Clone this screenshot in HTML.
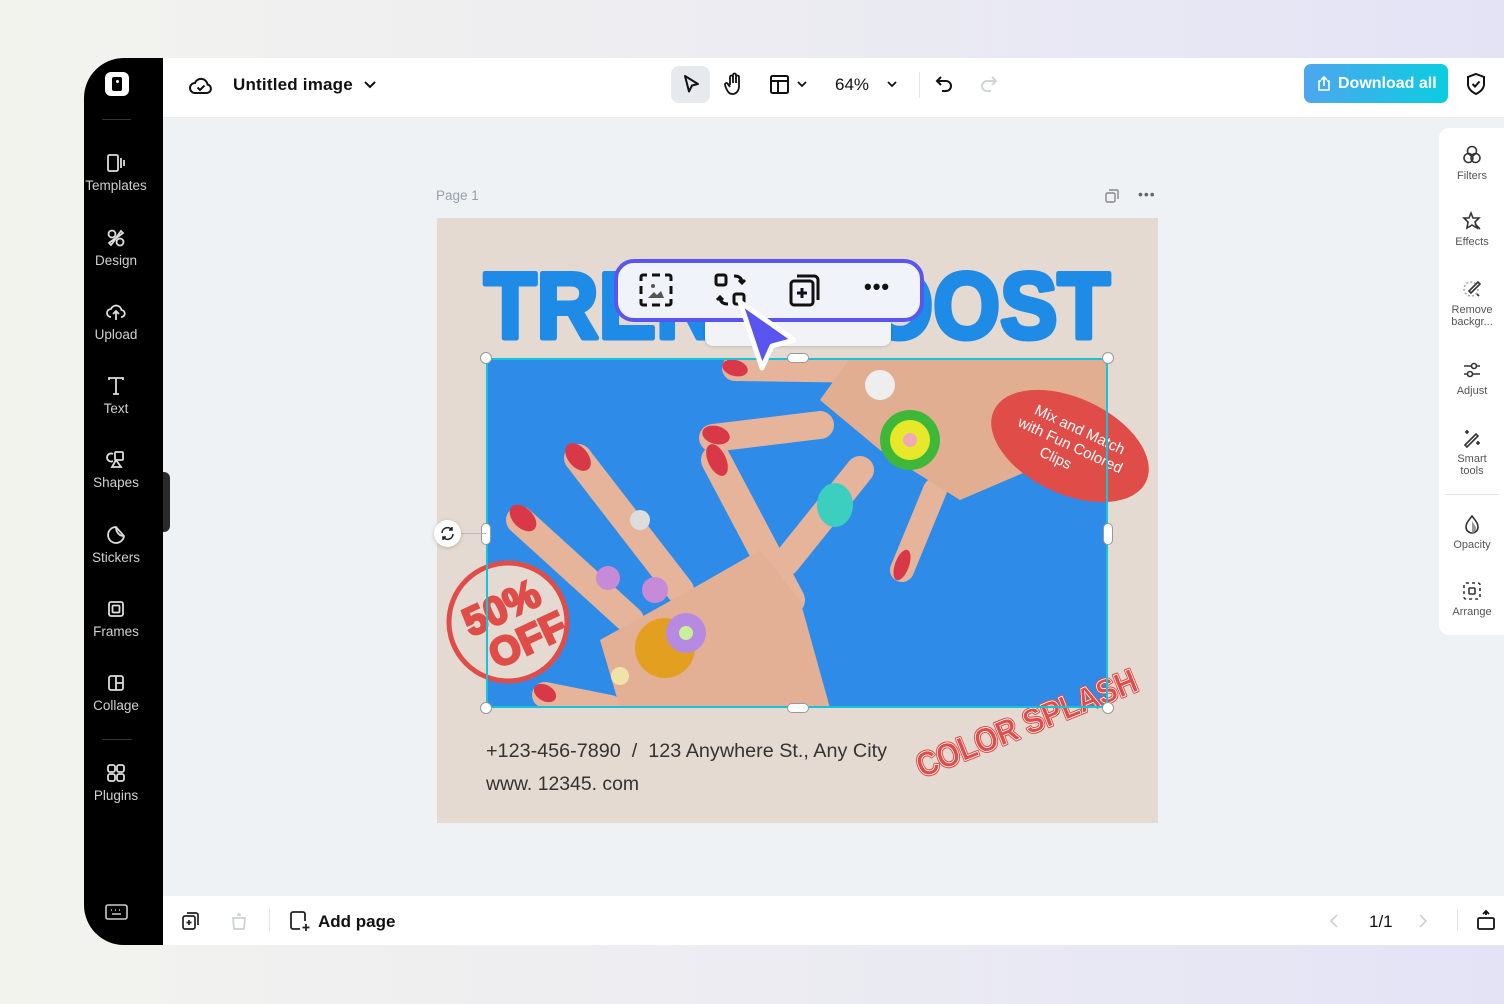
<!DOCTYPE html>
<html><head><meta charset="utf-8"><style>
*{margin:0;padding:0;box-sizing:border-box}
body{width:1504px;height:1004px;overflow:hidden;font-family:"Liberation Sans",sans-serif;background:linear-gradient(90deg,#f3f3ee 0%,#ececf2 50%,#e4e3f6 100%);position:relative}
.app{position:absolute;left:84px;top:58px;width:1420px;height:887px;border-radius:40px 0 0 40px;overflow:hidden;background:#eff2f5}
.side{position:absolute;left:0;top:0;width:79px;height:887px;background:#000}
.top{position:absolute;left:79px;top:0;right:0;height:60px;background:#fff;border-bottom:1px solid #e8eaee}
.bot{position:absolute;left:79px;bottom:0;right:0;height:49px;background:#fff}
.si{position:absolute;left:0;width:64px;text-align:center;color:#d0d0d0;font-size:13.5px;white-space:nowrap}
.si svg{display:block;margin:0 auto 4px}
.ri{position:absolute;left:0;width:66px;text-align:center;color:#555;font-size:11px;line-height:12px}
.ri svg{display:block;margin:0 auto 4px}
.abs{position:absolute}
.h{position:absolute;width:12px;height:12px;border-radius:50%;background:#fff;border:1px solid #999}
</style></head><body>
<div class="app">
 <div class="side">
  <div class="abs" style="left:21px;top:14px;width:24px;height:24px;background:#fff;border-radius:6px"><div class="abs" style="left:7px;top:5px;width:10px;height:14px;background:#000;border-radius:2px"></div><div class="abs" style="left:11px;top:8px;width:3px;height:3px;border-radius:50%;background:#fff"></div></div>
  <div class="abs" style="left:18px;top:61px;width:29px;height:1px;background:#333"></div>
  <div class="si" style="top:94px"><svg width="22" height="22" viewBox="0 0 22 22" fill="none" stroke="#ddd" stroke-width="1.8"><rect x="3" y="3" width="10" height="16" rx="1.5"/><path d="M16 6v10M19 8v6"/></svg>Templates</div>
  <div class="si" style="top:169px"><svg width="22" height="22" viewBox="0 0 22 22" fill="none" stroke="#ddd" stroke-width="1.8"><circle cx="7" cy="7" r="3.5"/><circle cx="15" cy="15" r="3.5"/><path d="M10 12l6-8 2 2-8 6zM12 10l-6 8-2-2 8-6z"/></svg>Design</div>
  <div class="si" style="top:243px"><svg width="22" height="22" viewBox="0 0 22 22" fill="none" stroke="#ddd" stroke-width="1.8"><path d="M6 16a4 4 0 0 1 0-8 5.5 5.5 0 0 1 10.5 1A3.5 3.5 0 0 1 16 16M11 19v-8M8 13l3-3 3 3"/></svg>Upload</div>
  <div class="si" style="top:317px"><svg width="22" height="22" viewBox="0 0 22 22" fill="none" stroke="#ddd" stroke-width="1.8"><path d="M4 5V3h14v2M11 3v16M8 19h6"/></svg>Text</div>
  <div class="si" style="top:391px"><svg width="22" height="22" viewBox="0 0 22 22" fill="none" stroke="#ddd" stroke-width="1.8"><path d="M8 5a4 4 0 1 0 0 7"/><rect x="10" y="3" width="8" height="8" rx="1"/><path d="M11 11l-4 7h9z"/></svg>Shapes</div>
  <div class="si" style="top:466px"><svg width="22" height="22" viewBox="0 0 22 22" fill="none" stroke="#ddd" stroke-width="1.8"><path d="M19 12A8 8 0 1 1 11 3l8 9z"/><path d="M11 3c0 5 3 9 8 9"/></svg>Stickers</div>
  <div class="si" style="top:540px"><svg width="22" height="22" viewBox="0 0 22 22" fill="none" stroke="#ddd" stroke-width="1.8"><rect x="4" y="4" width="14" height="14" rx="2"/><rect x="7.5" y="7.5" width="7" height="7" rx="1"/></svg>Frames</div>
  <div class="si" style="top:614px"><svg width="22" height="22" viewBox="0 0 22 22" fill="none" stroke="#ddd" stroke-width="1.8"><rect x="4" y="4" width="14" height="14" rx="2"/><path d="M11 4v14M11 11h7"/></svg>Collage</div>
  <div class="abs" style="left:18px;top:681px;width:30px;height:1px;background:#333"></div>
  <div class="si" style="top:704px"><svg width="22" height="22" viewBox="0 0 22 22" fill="none" stroke="#ddd" stroke-width="1.8"><rect x="3" y="3" width="7" height="7" rx="2"/><rect x="12" y="3" width="7" height="7" rx="2"/><rect x="3" y="12" width="7" height="7" rx="2"/><rect x="12" y="12" width="7" height="7" rx="2"/></svg>Plugins</div>
  <svg class="abs" style="left:21px;top:845px" width="23" height="18" viewBox="0 0 23 18" fill="none" stroke="#ccc" stroke-width="1.6"><rect x="1" y="2" width="21" height="14" rx="2"/><path d="M6 7h1M10 7h1M14 7h1M7 11h9"/></svg>
 </div>
 <div class="abs" style="left:79px;top:414px;width:7px;height:60px;background:#2a2a2a;border-radius:0 6px 6px 0"></div>
 <div class="top">
  <svg class="abs" style="left:26px;top:16px" width="24" height="22" viewBox="0 0 24 22" fill="none" stroke="#111" stroke-width="2"><path d="M6 19a5 5 0 0 1 0-10 6.5 6.5 0 0 1 12.5 1.5A4.3 4.3 0 0 1 18 19z"/><path d="M8.5 13.5l2.5 2.5 4.5-4.5"/></svg>
  <div class="abs" style="left:70px;top:17px;font-size:17px;color:#111;font-weight:bold;letter-spacing:.2px">Untitled image</div>
  <svg class="abs" style="left:200px;top:21px" width="14" height="12" viewBox="0 0 14 12" fill="none" stroke="#111" stroke-width="2"><path d="M2 3l5 5 5-5"/></svg>
  <div class="abs" style="left:508px;top:8px;width:39px;height:37px;background:#e6eaee;border-radius:8px"></div>
  <svg class="abs" style="left:517px;top:15px" width="22" height="22" viewBox="0 0 22 22" fill="none" stroke="#111" stroke-width="2"><path d="M5 3l13 8-6 1.5-3 6z" stroke-linejoin="round"/></svg>
  <svg class="abs" style="left:560px;top:14px" width="22" height="24" viewBox="0 0 22 24" fill="none" stroke="#111" stroke-width="1.8"><path d="M7 13V5a1.5 1.5 0 0 1 3 0v6V3a1.5 1.5 0 0 1 3 0v8V5a1.5 1.5 0 0 1 3 0v9c0 5-3 8-6.5 8S5 20 3 16l-1-3a1.5 1.5 0 0 1 3-.8L7 15"/></svg>
  <svg class="abs" style="left:606px;top:16px" width="22" height="22" viewBox="0 0 22 22" fill="none" stroke="#111" stroke-width="2"><rect x="2" y="2" width="17" height="17" rx="1.5"/><path d="M2 7h17M9 7v12"/></svg>
  <svg class="abs" style="left:633px;top:22px" width="12" height="10" viewBox="0 0 12 10" fill="none" stroke="#111" stroke-width="1.8"><path d="M2 2l4 4 4-4"/></svg>
  <div class="abs" style="left:672px;top:17px;font-size:17px;color:#111">64%</div>
  <svg class="abs" style="left:723px;top:22px" width="12" height="10" viewBox="0 0 12 10" fill="none" stroke="#111" stroke-width="1.8"><path d="M2 2l4 4 4-4"/></svg>
  <div class="abs" style="left:756px;top:14px;width:1px;height:26px;background:#e2e4e8"></div>
  <svg class="abs" style="left:771px;top:16px" width="22" height="22" viewBox="0 0 22 22" fill="none" stroke="#111" stroke-width="2"><path d="M7 3L3 7l4 4M3 7h9a5 5 0 0 1 0 10H8"/></svg>
  <svg class="abs" style="left:814px;top:16px" width="22" height="22" viewBox="0 0 22 22" fill="none" stroke="#cfd4da" stroke-width="2"><path d="M15 3l4 4-4 4M19 7h-9a5 5 0 0 0 0 10h4"/></svg>
  <div class="abs" style="left:1141px;top:6px;width:144px;height:39px;border-radius:7px;background:linear-gradient(90deg,#4ea6ee,#0bcde0);color:#fff;font-size:16px;font-weight:bold;line-height:39px;padding-left:34px">Download all</div>
  <svg class="abs" style="left:1153px;top:17px" width="16" height="17" viewBox="0 0 16 17" fill="none" stroke="#fff" stroke-width="1.6"><path d="M5 6H3v9h10V6h-2M8 11V2M5 5l3-3 3 3"/></svg>
  <svg class="abs" style="left:1302px;top:14px" width="22" height="24" viewBox="0 0 22 24" fill="none" stroke="#111" stroke-width="2"><path d="M11 2l8 3v7c0 5-4 8-8 10-4-2-8-5-8-10V5z"/><path d="M7.5 12l2.5 2.5 4.5-5"/></svg>
 </div>
 <div class="abs" style="left:352px;top:130px;font-size:13.5px;color:#98a0aa">Page 1</div>
 <svg class="abs" style="left:1020px;top:130px" width="16" height="16" viewBox="0 0 16 16" fill="none" stroke="#888" stroke-width="1.4"><rect x="2" y="5" width="9" height="9" rx="1.5"/><path d="M5 2h8a1 1 0 0 1 1 1v8"/></svg>
 <div class="abs" style="left:1054px;top:128px;font-size:14px;color:#666;letter-spacing:1px">•••</div>
 <div class="abs" style="left:353px;top:160px;width:721px;height:605px;background:#e4dad1;overflow:hidden">
  <svg width="721" height="605" viewBox="437 218 721 605" style="position:absolute;left:0;top:0">
   <text x="484" y="338" font-family="Liberation Sans" font-weight="bold" font-size="94" fill="#1e8be6" stroke="#1e8be6" stroke-width="5" stroke-linejoin="round" textLength="626" lengthAdjust="spacingAndGlyphs">TREND BOOST</text>
   <defs><clipPath id="ph"><rect x="486" y="358" width="622" height="350"/></clipPath></defs>
   <g clip-path="url(#ph)">
    <rect x="486" y="358" width="622" height="350" fill="#2e8ce8"/>
    <g stroke="#e6b49a" stroke-linecap="round" fill="none">
     <path d="M735 368L880 370" stroke-width="26"/>
     <path d="M713 438L820 425" stroke-width="28"/>
     <path d="M786 562L860 470" stroke-width="28"/>
     <path d="M902 570L935 490" stroke-width="24"/>
     <path d="M520 520L630 620" stroke-width="28"/>
     <path d="M578 458L680 590" stroke-width="28"/>
     <path d="M716 460L790 600" stroke-width="30"/>
     <path d="M545 695L610 708" stroke-width="26"/>
    </g>
    <path d="M850 358H1108V420L1030 470L960 500L880 450L820 400z" fill="#e2ae92"/>
    <path d="M600 640L690 590L760 550L800 600L830 708H620z" fill="#e3b095"/>
    <g fill="#d93848"><ellipse cx="523" cy="518" rx="10" ry="16" transform="rotate(-45 523 518)"/><ellipse cx="578" cy="457" rx="10" ry="16" transform="rotate(-40 578 457)"/><ellipse cx="717" cy="460" rx="9" ry="17" transform="rotate(-25 717 460)"/><ellipse cx="716" cy="435" rx="9" ry="14" transform="rotate(-75 716 435)"/><ellipse cx="735" cy="368" rx="8" ry="13" transform="rotate(-75 735 368)"/><ellipse cx="902" cy="565" rx="7" ry="16" transform="rotate(20 902 565)"/><ellipse cx="545" cy="693" rx="8" ry="12" transform="rotate(-60 545 693)"/></g>
    <circle cx="910" cy="440" r="30" fill="#3fb83a"/><circle cx="910" cy="440" r="20" fill="#e8e82a"/><circle cx="910" cy="440" r="7" fill="#f0a8b8"/>
    <ellipse cx="835" cy="505" rx="18" ry="22" fill="#3ccfc0"/>
    <circle cx="880" cy="385" r="15" fill="#eee"/>
    <circle cx="665" cy="648" r="30" fill="#e3a020"/><circle cx="686" cy="633" r="20" fill="#b58ae0"/><circle cx="686" cy="633" r="7" fill="#c9ef9a"/>
    <circle cx="655" cy="590" r="13" fill="#c68ad6"/><circle cx="608" cy="578" r="12" fill="#c68ad6"/><circle cx="640" cy="520" r="10" fill="#ddd"/><circle cx="620" cy="676" r="9" fill="#f1e3a8"/>
   </g>
   <ellipse cx="1070" cy="446" rx="84" ry="48" fill="#e04c48" transform="rotate(25 1070 446)"/>
   <g font-family="Liberation Sans" font-size="15" fill="#fff" text-anchor="middle" transform="rotate(25 1070 446)"><text x="1072" y="432">Mix and Match</text><text x="1070" y="450">with Fun Colored</text><text x="1062" y="468">Clips</text></g>
   <circle cx="508" cy="622" r="59" fill="#e4dad1" stroke="#e04c48" stroke-width="5"/>
   <g font-family="Liberation Sans" font-weight="bold" font-size="40" fill="#e04c48" stroke="#e04c48" stroke-width="2.5" transform="rotate(-25 508 622)"><text x="468" y="620">50%</text><text x="478" y="660">OFF</text></g>
   <text x="922" y="778" font-family="Liberation Sans" font-weight="bold" font-size="34" fill="#e04c48" stroke="#e04c48" stroke-width="3" stroke-linejoin="round" transform="rotate(-22 922 778)" textLength="235" lengthAdjust="spacingAndGlyphs">COLOR SPLASH</text>
   <text x="922" y="778" font-family="Liberation Sans" font-weight="bold" font-size="34" fill="none" stroke="#fff" stroke-width="0.8" transform="rotate(-22 922 778)" textLength="235" lengthAdjust="spacingAndGlyphs">COLOR SPLASH</text>
   <text x="486" y="757" font-family="Liberation Sans" font-size="19" fill="#333" xml:space="preserve" textLength="401" lengthAdjust="spacingAndGlyphs">+123-456-7890  /  123 Anywhere St., Any City</text>
   <text x="486" y="790" font-family="Liberation Sans" font-size="19" fill="#333" textLength="153" lengthAdjust="spacingAndGlyphs">www. 12345. com</text>
  </svg>
 </div>
 <div class="abs" style="left:402px;top:300px;width:622px;height:350px;border:2px solid #14c4d8"></div>
 <div class="h" style="left:396px;top:294px"></div><div class="h" style="left:1018px;top:294px"></div><div class="h" style="left:396px;top:644px"></div><div class="h" style="left:1018px;top:644px"></div>
 <div class="abs" style="left:703px;top:295px;width:22px;height:10px;border-radius:5px;background:#fff;border:1px solid #999"></div>
 <div class="abs" style="left:703px;top:645px;width:22px;height:10px;border-radius:5px;background:#fff;border:1px solid #999"></div>
 <div class="abs" style="left:397px;top:465px;width:10px;height:22px;border-radius:5px;background:#fff;border:1px solid #999"></div>
 <div class="abs" style="left:1019px;top:465px;width:10px;height:22px;border-radius:5px;background:#fff;border:1px solid #999"></div>
 <div class="abs" style="left:376px;top:475px;width:26px;height:1px;background:#bbb"></div>
 <div class="abs" style="left:350px;top:462px;width:27px;height:27px;border-radius:50%;background:#fff;box-shadow:0 1px 4px rgba(0,0,0,.2)"></div>
 <svg class="abs" style="left:355px;top:467px" width="17" height="17" viewBox="0 0 17 17" fill="none" stroke="#222" stroke-width="1.6"><path d="M3 8a5.5 5.5 0 0 1 10-3M14 9a5.5 5.5 0 0 1-10 3M13 2v3h-3M4 15v-3h3"/></svg>
 <div class="abs" style="left:621px;top:258px;width:186px;height:30px;background:#f2f3f6;border-radius:8px;box-shadow:0 1px 3px rgba(0,0,0,.15)"></div>
 <div class="abs" style="left:530px;top:201px;width:310px;height:63px;background:#f1f3fa;border:4px solid #5b55f0;border-radius:20px"></div>
 <svg class="abs" style="left:554px;top:214px" width="36" height="36" viewBox="0 0 36 36" fill="none" stroke="#111" stroke-width="3"><path d="M3 9V5a2 2 0 0 1 2-2h4M14 3h8M27 3h4a2 2 0 0 1 2 2v4M33 14v8M33 27v4a2 2 0 0 1-2 2h-4M22 33h-8M9 33H5a2 2 0 0 1-2-2v-4M3 22v-8"/><circle cx="15" cy="14" r="2" fill="#555" stroke="none"/><path d="M10 26l6-6 3 3 4-4 3 7z" fill="#555" stroke="none"/></svg>
 <svg class="abs" style="left:630px;top:214px" width="36" height="36" viewBox="0 0 36 36" fill="none" stroke="#111" stroke-width="3"><rect x="2" y="3" width="10" height="10" rx="2"/><rect x="20" y="22" width="10" height="10" rx="2"/><path d="M20 4c5 0 8 2 8 7M25 8l3 3 3-3M14 32c-5 0-8-2-8-7M3 28l3-3 3 3"/></svg>
 <svg class="abs" style="left:704px;top:214px" width="36" height="36" viewBox="0 0 36 36" fill="none" stroke="#111" stroke-width="3"><rect x="3" y="9" width="22" height="24" rx="3"/><path d="M9 4h17a4 4 0 0 1 4 4v20M14 16v10M9 21h10"/></svg>
 <div class="abs" style="left:780px;top:216px;font-size:22px;color:#111;font-weight:bold;letter-spacing:1px">•••</div>
 <svg class="abs" style="left:650px;top:240px" width="64" height="76" viewBox="0 0 64 76" fill="#5b55f0" stroke="#fff" stroke-width="5" stroke-linejoin="round"><path d="M6 4l54 38-22 6-10 22z"/></svg>
 <div class="abs" style="left:1355px;top:70px;width:66px;height:507px;background:#fff;border-radius:10px 0 0 10px">
  <div class="ri" style="top:16px"><svg width="22" height="22" viewBox="0 0 22 22" fill="none" stroke="#333" stroke-width="1.6"><circle cx="11" cy="7" r="4.5"/><circle cx="7.5" cy="14" r="4.5"/><circle cx="14.5" cy="14" r="4.5"/></svg>Filters</div>
  <div class="ri" style="top:82px"><svg width="22" height="22" viewBox="0 0 22 22" fill="none" stroke="#333" stroke-width="1.6"><path d="M10 3l2 5 6 0-4 4 2 6-5-3-5 3 1-6-4-4 5 0zM14 14l5 5"/></svg>Effects</div>
  <div class="ri" style="top:150px"><svg width="22" height="22" viewBox="0 0 22 22" fill="none" stroke="#333" stroke-width="1.6"><circle cx="10" cy="11" r="7" stroke-dasharray="2 2" stroke="#aaa"/><path d="M17 4l-9 9 2 2 9-9zM16 16l2 2"/></svg>Remove<br>backgr...</div>
  <div class="ri" style="top:231px"><svg width="22" height="22" viewBox="0 0 22 22" fill="none" stroke="#333" stroke-width="1.6"><path d="M3 7h16M3 15h16"/><circle cx="13" cy="7" r="2.5" fill="#fff"/><circle cx="9" cy="15" r="2.5" fill="#fff"/></svg>Adjust</div>
  <div class="ri" style="top:299px"><svg width="22" height="22" viewBox="0 0 22 22" fill="none" stroke="#333" stroke-width="1.6"><path d="M4 18L15 7l2 2L6 20zM6 3v4M4 5h4M17 14v4M15 16h4"/></svg>Smart<br>tools</div>
  <div class="abs" style="left:6px;top:366px;width:54px;height:1px;background:#e6e6e6"></div>
  <div class="ri" style="top:385px"><svg width="22" height="22" viewBox="0 0 22 22" fill="none" stroke="#333" stroke-width="1.6"><path d="M11 3c3 4 6 7 6 11a6 6 0 0 1-12 0c0-4 3-7 6-11z"/><path d="M11 8v12a5 5 0 0 0 4-6z" fill="#999" stroke="none"/></svg>Opacity</div>
  <div class="ri" style="top:452px"><svg width="22" height="22" viewBox="0 0 22 22" fill="none" stroke="#333" stroke-width="1.6"><rect x="3" y="3" width="16" height="16" rx="2" stroke-dasharray="3 3"/><rect x="8" y="8" width="6" height="6" rx="1"/></svg>Arrange</div>
 </div>
 <div class="bot">
  <svg class="abs" style="left:18px;top:15px" width="20" height="20" viewBox="0 0 20 20" fill="none" stroke="#222" stroke-width="1.7"><rect x="2" y="5" width="12" height="13" rx="2"/><path d="M6 2h9a2 2 0 0 1 2 2v10M8 9v5M5.5 11.5h5"/></svg>
  <svg class="abs" style="left:66px;top:15px" width="20" height="20" viewBox="0 0 20 20" fill="none" stroke="#ccd0d6" stroke-width="1.7"><path d="M4 7h12l-1 11H5zM8 4h4M10 2v2"/></svg>
  <div class="abs" style="left:106px;top:13px;width:1px;height:22px;background:#e2e4e8"></div>
  <svg class="abs" style="left:126px;top:14px" width="22" height="22" viewBox="0 0 22 22" fill="none" stroke="#222" stroke-width="1.8"><path d="M11 19H4a2 2 0 0 1-2-2V4a2 2 0 0 1 2-2h10a2 2 0 0 1 2 2v7M17 14v7M13.5 17.5h7"/></svg>
  <div class="abs" style="left:155px;top:16px;font-size:17px;font-weight:bold;color:#111">Add page</div>
  <svg class="abs" style="left:1165px;top:17px" width="12" height="16" viewBox="0 0 12 16" fill="none" stroke="#ccd0d6" stroke-width="1.6"><path d="M9 2L3 8l6 6"/></svg>
  <div class="abs" style="left:1206px;top:16px;font-size:17px;color:#111">1/1</div>
  <svg class="abs" style="left:1254px;top:17px" width="12" height="16" viewBox="0 0 12 16" fill="none" stroke="#ccd0d6" stroke-width="1.6"><path d="M3 2l6 6-6 6"/></svg>
  <div class="abs" style="left:1294px;top:13px;width:1px;height:22px;background:#e2e4e8"></div>
  <svg class="abs" style="left:1313px;top:13px" width="20" height="22" viewBox="0 0 20 22" fill="none" stroke="#111" stroke-width="1.8"><rect x="2" y="9" width="16" height="11" rx="1.5"/><path d="M10 2v4M7 5l3-3 3 3"/></svg>
 </div>
</div>
</body></html>
